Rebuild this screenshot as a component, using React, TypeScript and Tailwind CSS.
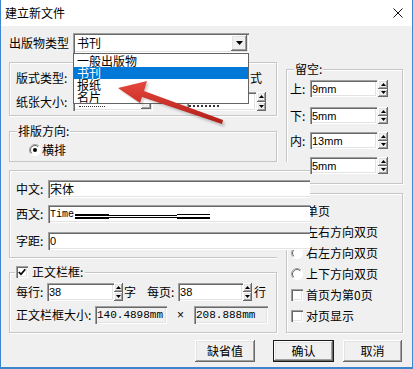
import React from "react";

const F = "font-['Noto_Sans_CJK_SC',sans-serif]";
const SANS = "font-['Liberation_Sans',sans-serif]";
const MONO = "font-['Liberation_Mono',monospace]";
const SUNKEN =
  "shadow-[inset_1px_1px_0_#a0a0a0,inset_2px_2px_0_#696969,inset_-1px_-1px_0_#ffffff,inset_-2px_-2px_0_#e3e3e3]";
const RAISED =
  "shadow-[inset_-1px_-1px_0_#696969,inset_1px_1px_0_#ffffff,inset_-2px_-2px_0_#a0a0a0,inset_2px_2px_0_#e3e3e3]";
const GROUP = "border border-[#c6c6c6] shadow-[inset_1px_1px_0_#ffffff,1px_1px_0_#ffffff]";

function Field({ cls = "", ro = false, children }: { cls?: string; ro?: boolean; children?: React.ReactNode }) {
  return (
    <div
      className={`${SUNKEN} ${ro ? "bg-[#f0f0f0]" : "bg-white"} flex items-center pl-[2px] shrink-0 overflow-hidden whitespace-nowrap ${cls}`}
    >
      {children}
    </div>
  );
}

function Spin({ cls = "" }: { cls?: string }) {
  return (
    <div className={`flex flex-col shrink-0 ${cls}`}>
      <div className={`flex-1 bg-[#f0f0f0] ${RAISED} flex items-center justify-center`}>
        <svg width="5" height="3" viewBox="0 0 5 3">
          <path d="M2.5 0L5 3H0z" fill="#000" />
        </svg>
      </div>
      <div className={`flex-1 bg-[#f0f0f0] ${RAISED} flex items-center justify-center`}>
        <svg width="5" height="3" viewBox="0 0 5 3">
          <path d="M0 0H5L2.5 3z" fill="#000" />
        </svg>
      </div>
    </div>
  );
}

function Radio({ checked = false }: { checked?: boolean }) {
  return (
    <svg width="12" height="12" viewBox="0 0 12 12" className="shrink-0">
      <circle cx="6" cy="6" r="5.5" fill="#ffffff" />
      <path d="M2.1 9.9 A5.5 5.5 0 0 1 9.9 2.1" stroke="#a0a0a0" fill="none" />
      <path d="M2.8 9.2 A4.5 4.5 0 0 1 9.2 2.8" stroke="#696969" fill="none" />
      <path d="M9.9 2.1 A5.5 5.5 0 0 1 2.1 9.9" stroke="#ffffff" fill="none" />
      {checked && <circle cx="6" cy="6" r="2" fill="#000" />}
    </svg>
  );
}

function Check({ checked = false }: { checked?: boolean }) {
  return (
    <div className={`w-[12px] h-[12px] bg-white shrink-0 ${SUNKEN} flex items-center justify-center`}>
      {checked && (
        <svg width="8" height="8" viewBox="0 0 8 8">
          <path d="M0.8 4L3 6.3L7.3 1.3" stroke="#000" strokeWidth="1.7" fill="none" />
        </svg>
      )}
    </div>
  );
}

function Btn({ cls = "", def = false, children }: { cls?: string; def?: boolean; children: React.ReactNode }) {
  return (
    <div className={`h-[22px] shrink-0 ${def ? "border border-[#1a1a1a]" : ""} ${cls}`}>
      <div className={`w-full h-full bg-[#f0f0f0] ${RAISED} flex items-center justify-center text-[12px]`}>
        {children}
      </div>
    </div>
  );
}

function Legend({ children, cls = "" }: { children: React.ReactNode; cls?: string }) {
  return (
    <div className={`absolute -top-[8px] h-[14px] px-[1px] bg-[#f0f0f0] leading-[14px] flex items-center ${cls}`}>
      {children}
    </div>
  );
}

export default function App() {
  return (
    <div
      className={`relative w-[413px] h-[369px] overflow-hidden bg-[#f0f0f0] border-x border-b-2 border-[#3c86cf] text-[12px] leading-[14px] text-black flex flex-col ${F}`}
    >
      {/* title bar */}
      <div className="h-[26px] bg-white flex items-center justify-between pl-[4px] pr-[9px] shrink-0">
        <span>建立新文件</span>
        <svg width="10" height="10" viewBox="0 0 10 10">
          <path d="M0.5 0.5L9.5 9.5M9.5 0.5L0.5 9.5" stroke="#111" strokeWidth="1" />
        </svg>
      </div>

      {/* columns */}
      <div className="flex pl-[8px] shrink-0">
        {/* left column */}
        <div className="w-[268px] flex flex-col shrink-0">
          <div className="mt-[7px] h-[20px] flex items-center">
            <span className="w-[64px] shrink-0">出版物类型</span>
            <div className={`w-[176px] h-[20px] bg-white ${SUNKEN} flex p-[2px]`}>
              <div className="flex-1 flex items-center pl-[2px]">书刊</div>
              <div className={`w-[16px] bg-[#f0f0f0] ${RAISED} flex items-center justify-center`}>
                <svg width="7" height="4" viewBox="0 0 7 4">
                  <path d="M0 0H7L3.5 4z" fill="#000" />
                </svg>
              </div>
            </div>
          </div>

          {/* 版式 group */}
          <div className={`relative mt-[9px] h-[54px] ${GROUP} pt-[6px] pl-[6px] flex flex-col`}>
            <div className="h-[18px] flex items-center">
              <span className="w-[57px] shrink-0">版式类型:</span>
              <div className={`w-[176px] h-[18px] bg-white shrink-0 ${SUNKEN}`} />
              <span className="ml-[1px]">式</span>
            </div>
            <div className="mt-[5px] h-[19px] flex items-center">
              <span className="w-[57px] shrink-0">纸张大小:</span>
              <div className={`w-[80px] h-[19px] bg-white shrink-0 ${SUNKEN} flex p-[2px]`}>
                <div className="flex-1 flex items-end pl-[4px] pb-[2px]">
                  <div className="w-[26px] h-[2px] border-b border-dotted border-[#333]" />
                </div>
                <div className={`w-[10px] bg-[#f0f0f0] ${RAISED} flex items-center justify-center`}>
                  <svg width="5" height="3" viewBox="0 0 5 3">
                    <path d="M0 0H5L2.5 3z" fill="#000" />
                  </svg>
                </div>
              </div>
              <Field cls="ml-[34px] w-[69px] h-[19px] items-end pb-[4px]">
                <div className="w-[30px] h-[2px] border-b-2 border-dotted border-[#333]" />
              </Field>
              <Spin cls="ml-[1px] w-[9px] h-[19px]" />
            </div>
          </div>

          {/* 排版方向 group */}
          <div className={`relative mt-[15px] h-[31px] ${GROUP} pt-[11px] pl-[19px]`}>
            <Legend cls="left-[7px]">排版方向:</Legend>
            <div className="h-[14px] flex items-center gap-[1px]">
              <Radio checked />
              <span>横排</span>
            </div>
          </div>

          {/* font panel (overlapping) */}
          <div className="relative z-10 w-[301px] h-[88px] bg-[#f0f0f0] overflow-hidden pt-[8px] shrink-0">
            <div className="w-[330px] h-[90px] border-l border-t border-[#c6c6c6] shadow-[inset_1px_1px_0_#ffffff] pt-[9px] pl-[6px] flex flex-col">
              <div className="h-[18px] flex items-center">
                <span className="w-[32px] shrink-0">中文:</span>
                <Field cls="w-[290px] h-[18px]">宋体</Field>
              </div>
              <div className="mt-[7px] h-[18px] flex items-center">
                <span className="w-[32px] shrink-0">西文:</span>
                <Field cls="w-[290px] h-[18px] items-stretch">
                  <span className={`${MONO} text-[10px] leading-[18px] pt-[1px]`}>Time</span>
                  <svg width="136" height="18" viewBox="0 0 136 18" className="shrink-0">
                    <rect x="1" y="9" width="34" height="2" fill="#000" />
                    <rect x="1" y="12" width="34" height="2" fill="#000" />
                    <rect x="35" y="10" width="68" height="1" fill="#000" />
                    <rect x="35" y="12" width="68" height="1" fill="#000" />
                    <rect x="103" y="9" width="33" height="1" fill="#000" />
                    <rect x="103" y="12" width="33" height="2" fill="#000" />
                  </svg>
                </Field>
              </div>
              <div className="mt-[9px] h-[18px] flex items-center">
                <span className="w-[32px] shrink-0">字距:</span>
                <Field cls={`w-[290px] h-[18px] ${SANS} text-[11px]`}>0</Field>
              </div>
            </div>
          </div>
          <div className="w-[268px] h-[8px] border-l border-b border-[#c6c6c6] shadow-[inset_1px_0_0_#ffffff,0_1px_0_#ffffff] shrink-0" />

          {/* 正文栏框 group */}
          <div className={`relative mt-[14px] h-[61px] ${GROUP} pt-[10px] pl-[6px] flex flex-col`}>
            <Legend cls="left-[5px] gap-[4px] pr-[2px]">
              <Check checked />
              <span>正文栏框:</span>
            </Legend>
            <div className="h-[18px] flex items-center">
              <span className="w-[31px] shrink-0">每行:</span>
              <Field cls={`w-[67px] h-[18px] ${SANS} text-[11px]`}>38</Field>
              <Spin cls="w-[9px] h-[18px]" />
              <span className="ml-[1px]">字</span>
              <span className="ml-[11px] w-[31px] shrink-0">每页:</span>
              <Field cls={`w-[65px] h-[18px] ${SANS} text-[11px]`}>38</Field>
              <Spin cls="w-[9px] h-[18px]" />
              <span className="ml-[2px]">行</span>
            </div>
            <div className="mt-[5px] h-[18px] flex items-center">
              <span className="w-[79px] shrink-0">正文栏框大小:</span>
              <Field ro cls={`w-[72px] h-[18px] ${MONO} text-[11px]`}>140.4898mm</Field>
              <span className={`w-[27px] text-center ${SANS} text-[12px]`}>×</span>
              <Field ro cls={`w-[74px] h-[18px] ${MONO} text-[11px]`}>208.888mm</Field>
            </div>
          </div>
        </div>

        {/* right column */}
        <div className="ml-[9px] w-[117px] flex flex-col shrink-0">
          <div className={`relative mt-[43px] h-[115px] ${GROUP} pt-[10px] pl-[3px] flex flex-col`}>
            <Legend cls="left-[7px]">留空:</Legend>
            {[
              ["上:", "9mm", ""],
              ["下:", "5mm", "mt-[10px]"],
              ["内:", "13mm", "mt-[8px]"],
              ["", "5mm", "mt-[8px]"],
            ].map(([l, v, m], i) => (
              <div key={i} className={`h-[17px] flex items-center ${m}`}>
                <span className="w-[20px] shrink-0">{l}</span>
                <Field cls={`w-[67px] h-[17px] ${SANS} text-[11px]`}>{v}</Field>
                <Spin cls="ml-[1px] w-[10px] h-[17px]" />
              </div>
            ))}
          </div>

          <div className={`relative mt-[9px] h-[140px] ${GROUP} pt-[6px] pl-[4px] flex flex-col`}>
            {[
              ["r", "单页"],
              ["r", "左右方向双页"],
              ["r", "右左方向双页"],
              ["r", "上下方向双页"],
              ["c", "首页为第0页"],
              ["c", "对页显示"],
            ].map(([t, l], i) => (
              <div key={i} className="h-[21px] flex items-center gap-[3px]">
                {t === "r" ? <Radio /> : <Check />}
                <span className="whitespace-nowrap">{l}</span>
              </div>
            ))}
          </div>
        </div>
      </div>

      {/* buttons */}
      <div className="mt-[7px] h-[22px] flex pl-[194px] shrink-0">
        <Btn cls="w-[60px]">缺省值</Btn>
        <Btn cls="ml-[18px] w-[61px]" def>
          确认
        </Btn>
        <Btn cls="ml-[9px] w-[59px]">取消</Btn>
      </div>

      {/* open dropdown list */}
      <div className="absolute left-[72px] top-[53px] w-[176px] h-[51px] bg-white border border-[#646464] z-20 pt-[1px] flex flex-col">
        <div className="h-[12px] leading-[12px] pl-[3px]">一般出版物</div>
        <div className="h-[12px] leading-[12px] pl-[3px] bg-[#0078d7] text-white">书刊</div>
        <div className="h-[12px] leading-[12px] pl-[3px]">报纸</div>
        <div className="h-[12px] leading-[12px] pl-[3px]">名片</div>
      </div>

      {/* red arrow annotation */}
      <svg
        className="absolute left-0 top-0 z-30 pointer-events-none"
        width="413"
        height="369"
        viewBox="0 0 413 369"
      >
        <defs>
          <linearGradient id="ag" x1="0" y1="0" x2="0" y2="1">
            <stop offset="0" stopColor="#e8473d" />
            <stop offset="1" stopColor="#b01f18" />
          </linearGradient>
          <filter id="sh" x="-10%" y="-30%" width="120%" height="160%">
            <feGaussianBlur stdDeviation="1.2" />
          </filter>
        </defs>
        <polygon
          points="119,90 148,83 145,93 224,122 223,127 143,99 141,105"
          fill="#000"
          opacity="0.18"
          filter="url(#sh)"
        />
        <polygon points="117,88 146,81 143,91 222,120 221,124 141,97 139,103" fill="url(#ag)" />
      </svg>
    </div>
  );
}
